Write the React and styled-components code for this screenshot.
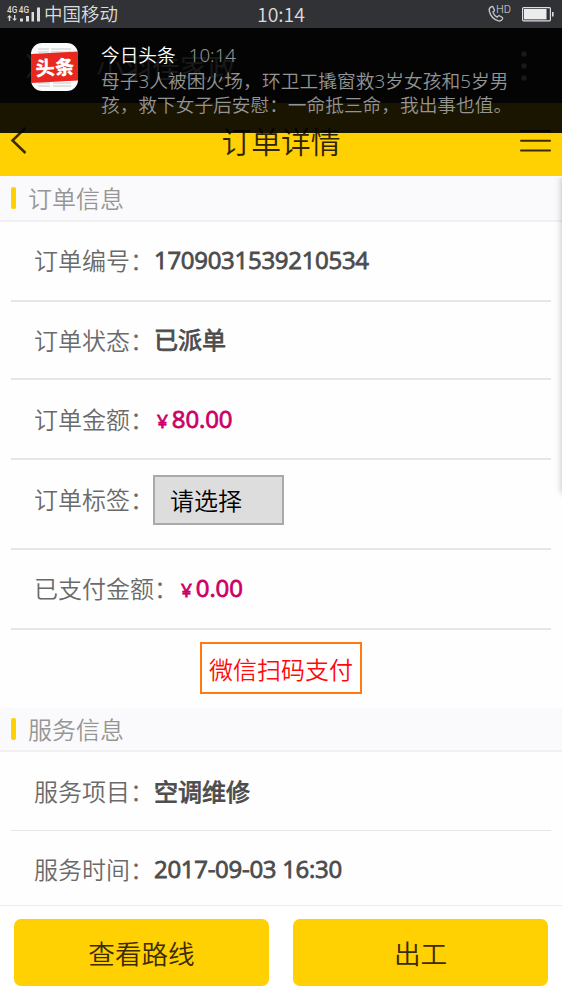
import React from "react";
import styled, { createGlobalStyle } from "styled-components";

const GlobalStyle = createGlobalStyle`
  * { box-sizing: border-box; }
  body {
    margin: 0;
    background: #fff;
    font-family: "Noto Sans CJK SC", sans-serif;
    font-weight: 350;
  }
  button { font: inherit; padding: 0; border: 0; }
`;

const Screen = styled.div`
  position: relative;
  width: 562px;
  height: 1000px;
  overflow: hidden;
  display: flex;
  flex-direction: column;
  background: #fefefe;
`;

const StatusBar = styled.header`
  height: 28px;
  flex: none;
  display: grid;
  grid-template-columns: 1fr auto 1fr;
  align-items: center;
  padding: 0 8px 0 6px;
  background: #313236;
  color: #dcdcdc;
  font-size: 18.5px;
  line-height: 28px;
`;

const StatusGroup = styled.div`
  display: flex;
  align-items: center;
  justify-content: ${(p) => (p.$end ? "flex-end" : "flex-start")};
  gap: ${(p) => p.$gap}px;
  height: 28px;
`;

const Carrier = styled.span`
  margin-top: -2px;
`;

const Clock = styled.span`
  font-size: 19.5px;
  padding-left: 2px;
`;

const AppBar = styled.div`
  height: 75px;
  flex: none;
  display: flex;
  align-items: center;
  padding: 0 35px 0 27px;
  background: #2b2c30;
  color: #fff;
  font-size: 28px;
`;

const AppName = styled.span`
  flex: 1;
  margin-left: 51px;
  padding-top: 2px;
`;

const TitleBar = styled.div`
  height: 73px;
  flex: none;
  display: grid;
  grid-template-columns: 60px 1fr 60px;
  align-items: center;
  background: #ffd002;
  color: #2f2306;
  svg { display: block; }
`;

const Title = styled.h1`
  margin: 0;
  text-align: center;
  font-size: 29.8px;
  line-height: 40px;
  font-weight: 350;
`;

const Notice = styled.aside`
  position: absolute;
  top: 28px;
  left: 0;
  right: 0;
  height: 105px;
  display: flex;
  padding: 15px 30px 0 31px;
  gap: 23px;
  background: rgba(0, 0, 0, 0.9);
  color: #949494;
  font-family: "Noto Sans", "Noto Sans CJK SC", sans-serif;
  font-size: 18.7px;
  line-height: 24px;
  svg { flex: none; }
`;

const NoticeBody = styled.div`
  white-space: nowrap;
`;

const NoticeHead = styled.div`
  line-height: 23px;
  margin-bottom: 3px;
  b { color: #fff; font-weight: 350; margin-right: 13px; }
`;

const NoticeLine = styled.div`
  height: 24px;
  letter-spacing: ${(p) => p.$track || 0}px;
`;

const SectionHead = styled.h2`
  height: ${(p) => p.$h}px;
  flex: none;
  margin: 0;
  display: flex;
  align-items: center;
  padding: 0 0 0 11px;
  gap: 12px;
  background: #fafafc;
  border-bottom: 2px solid #f0f0f0;
  color: #969696;
  font-size: 24px;
  line-height: 30px;
  font-weight: 350;
  &::before {
    content: "";
    width: 5px;
    height: 22px;
    border-radius: 2px;
    background: #ffd002;
  }
  span { margin-top: -1px; }
`;

const Row = styled.div`
  height: ${(p) => p.$h}px;
  flex: none;
  display: flex;
  align-items: center;
  margin: 0 11px;
  padding: ${(p) => p.$drop || 0}px 0 ${(p) => p.$lift || 0}px 23px;
  border-bottom: ${(p) => (p.$last ? 0 : p.$line || 2)}px solid #e6e6e6;
  font-size: 24px;
  line-height: 36px;
  color: #6a6a6a;
  white-space: nowrap;
`;

const Label = styled.span`
  width: ${(p) => p.$w || 120}px;
  flex: none;
  margin-top: ${(p) => (p.$raised ? -2 : 0)}px;
`;

const Value = styled.strong`
  font-family: "Open Sans", "Noto Sans CJK SC", sans-serif;
  font-weight: 400;
  -webkit-text-stroke: 0.8px currentColor;
  letter-spacing: ${(p) => (p.$cjk ? 0 : p.$money ? -0.1 : -0.3)}px;
  margin-top: ${(p) => (p.$raised ? -2 : p.$lowered ? 2 : 0)}px;
  color: ${(p) => (p.$money ? "#cc0066" : "#4c4c4c")};
`;

const Yen = styled.span`
  font-size: 19px;
  margin: 0 4px 0 3px;
`;

const TagSelect = styled.button`
  width: 131px;
  height: 50px;
  margin-left: -1px;
  padding: 0 0 0 15px;
  border: 2px solid #a9a9a9;
  background: #ddd;
  color: #000;
  text-align: left;
`;

const PayArea = styled.div`
  height: 78px;
  flex: none;
  display: flex;
  justify-content: center;
  align-items: flex-start;
  padding-top: 12px;
`;

const PayButton = styled.button`
  width: 162px;
  height: 52px;
  border: 2px solid #ff7a14;
  background: #fff;
  color: #ff0a0a;
  font-size: 24px;
`;

const ActionBar = styled.footer`
  height: 95px;
  flex: none;
  display: grid;
  grid-template-columns: 1fr 1fr;
  gap: 24px;
  padding: 13px 14px 14px;
  border-top: 1px solid #ececec;
  background: #fff;
`;

const Action = styled.button`
  border-radius: 7px;
  background: #ffd002;
  color: #3a2b05;
  font-size: 26.6px;
`;

const ScrollEdge = styled.div`
  position: absolute;
  top: 177px;
  right: -10px;
  width: 10px;
  height: 316px;
  box-shadow: 0 0 7px rgba(0, 0, 0, 0.28);
  clip-path: inset(0 0 -8px -10px);
`;

const SignalIcon = () => (
  <svg width="35" height="18" viewBox="0 0 35 18" fill="#dcdcdc">
    <text x="1" y="7.5" fontFamily="Roboto" fontWeight="500" fontSize="8.2">4G</text>
    <text x="12.8" y="7.5" fontFamily="Roboto" fontWeight="500" fontSize="8.2">4G</text>
    <path d="M1 12.5 3.5 10 6 12.5H4.2V16H2.8V12.5zM6.3 13.5H8V10h1.3v3.5H11L8.7 16z" />
    <rect x="14" y="13.5" width="3" height="3" />
    <rect x="20" y="11" width="3" height="5.5" />
    <rect x="25.5" y="7" width="2.5" height="9.5" />
    <rect x="31" y="2.5" width="3" height="14" />
  </svg>
);

const CallIcon = () => (
  <svg width="25" height="20" viewBox="0 0 25 20">
    <path
      d="M4.5 2.7C2.9 3.5 1.8 5 2.3 7c1 4.4 4.2 8.2 8.6 9.7 2 .6 4-.2 4.7-2.1.2-.6 0-1-.5-1.3l-2.6-1.5c-.6-.3-1-.2-1.4.3l-.9 1c-2-.9-3.6-2.9-4.3-5l1.1-.8c.5-.4.6-.8.4-1.4L6.1 3.2c-.3-.6-.9-.8-1.6-.5z"
      fill="none"
      stroke="#c8c8c8"
      strokeWidth="1.3"
    />
    <text x="9" y="9.3" fontFamily="Roboto" fontSize="11" fill="#dedede">HD</text>
  </svg>
);

const BatteryIcon = () => (
  <svg width="32" height="15" viewBox="0 0 32 15">
    <rect x="0.6" y="0.6" width="27.8" height="13.2" rx="1" fill="none" stroke="#dedede" strokeWidth="1.2" />
    <rect x="2" y="2" width="22.5" height="10.4" fill="#ececec" />
    <rect x="30" y="5" width="1.6" height="4.5" fill="#dedede" />
  </svg>
);

const CloseIcon = () => (
  <svg width="18" height="24" viewBox="0 0 18 24" fill="none" stroke="#fff" strokeWidth="2">
    <path d="M0 0 18 24M18 0 0 24" />
  </svg>
);

const MoreIcon = () => (
  <svg width="6" height="30" viewBox="0 0 6 30" fill="#fff">
    <circle cx="3" cy="3" r="2.7" />
    <circle cx="3" cy="15" r="2.7" />
    <circle cx="3" cy="27" r="2.7" />
  </svg>
);

const BackIcon = () => (
  <svg width="30" height="30" viewBox="0 0 30 30" fill="none" stroke="#3a2b05" strokeWidth="2.5">
    <path d="M25.5 2.8 12.5 15.5l13 12.5" />
  </svg>
);

const MenuIcon = () => (
  <svg width="50" height="30" viewBox="0 0 50 30" stroke="#3a2b05" strokeWidth="2" strokeLinecap="round">
    <path d="M19 6H48M19 15.7H48M19 25.5H48" />
  </svg>
);

const NewsLogo = () => (
  <svg width="47" height="48" viewBox="0 0 47 48">
    <rect width="47" height="48" rx="11" fill="#fbfbfb" />
    <path
      d="M7 6h11M7 9h11M20 6h20M20 9h20M7 40h12M22 40h18M7 43h12M22 43h18"
      stroke="#d9d9d9"
      strokeWidth="1.6"
    />
    <path d="M0 11 47 8.5V37.5L0 40z" fill="#e8281e" />
    <text
      x="4.3"
      y="31.7"
      fontFamily="Noto Sans CJK SC"
      fontWeight="900"
      fontSize="19.5"
      fill="#fff"
      transform="rotate(-3 23 24)"
    >
      头条
    </text>
  </svg>
);

export default function App() {
  return (
    <>
      <GlobalStyle />
      <Screen>
        <StatusBar>
          <StatusGroup $gap={3}>
            <SignalIcon />
            <Carrier>中国移动</Carrier>
          </StatusGroup>
          <Clock>10:14</Clock>
          <StatusGroup $end $gap={10}>
            <CallIcon />
            <BatteryIcon />
          </StatusGroup>
        </StatusBar>

        <AppBar>
          <CloseIcon />
          <AppName>小羽佳家政</AppName>
          <MoreIcon />
        </AppBar>

        <TitleBar>
          <BackIcon />
          <Title>订单详情</Title>
          <MenuIcon />
        </TitleBar>

        <SectionHead $h={46}><span>订单信息</span></SectionHead>
        <Row $h={80}>
          <Label $raised>订单编号：</Label>
          <Value $raised>1709031539210534</Value>
        </Row>
        <Row $h={78}>
          <Label>订单状态：</Label>
          <Value $cjk>已派单</Value>
        </Row>
        <Row $h={80}>
          <Label>订单金额：</Label>
          <Value $money $lowered><Yen>¥</Yen>80.00</Value>
        </Row>
        <Row $h={90} $lift={8}>
          <Label $raised>订单标签：</Label>
          <TagSelect>请选择</TagSelect>
        </Row>
        <Row $h={80}>
          <Label $w={144} $raised>已支付金额：</Label>
          <Value $money><Yen>¥</Yen>0.00</Value>
        </Row>
        <PayArea>
          <PayButton>微信扫码支付</PayButton>
        </PayArea>

        <SectionHead $h={44}><span>服务信息</span></SectionHead>
        <Row $h={79} $line={1}>
          <Label>服务项目：</Label>
          <Value $cjk $lowered>空调维修</Value>
        </Row>
        <Row $h={74} $drop={2} $last>
          <Label>服务时间：</Label>
          <Value>2017-09-03 16:30</Value>
        </Row>

        <ActionBar>
          <Action>查看路线</Action>
          <Action>出工</Action>
        </ActionBar>

        <ScrollEdge />
        <Notice>
          <NewsLogo />
          <NoticeBody>
            <NoticeHead><b>今日头条</b>10:14</NoticeHead>
            <NoticeLine $track={0.08}>母子3人被困火场，环卫工撬窗救3岁女孩和5岁男</NoticeLine>
            <NoticeLine>孩，救下女子后安慰：一命抵三命，我出事也值。</NoticeLine>
          </NoticeBody>
        </Notice>
      </Screen>
    </>
  );
}
